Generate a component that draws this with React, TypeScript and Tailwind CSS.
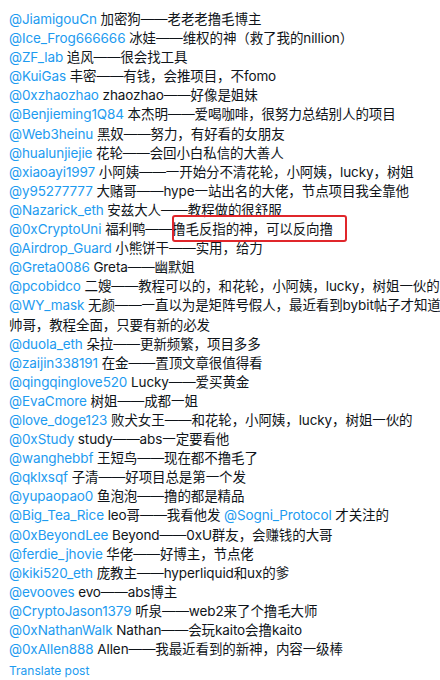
import React from "react";

type Row = { h?: string; t: (string | { at: string })[] };

const rows: Row[] = [
    { h: "JiamigouCn", t: ["加密狗——老老老撸毛博主"] },
    { h: "Ice_Frog666666", t: ["冰娃——维权的神（救了我的nillion）"] },
    { h: "ZF_lab", t: ["追风——很会找工具"] },
    { h: "KuiGas", t: ["丰密——有钱，会推项目，不fomo"] },
    { h: "0xzhaozhao", t: ["zhaozhao——好像是姐妹"] },
    { h: "Benjieming1Q84", t: ["本杰明——爱喝咖啡，很努力总结别人的项目"] },
    { h: "Web3heinu", t: ["黑奴——努力，有好看的女朋友"] },
    { h: "hualunjiejie", t: ["花轮——会回小白私信的大善人"] },
    { h: "xiaoayi1997", t: ["小阿姨——一开始分不清花轮，小阿姨，lucky，树姐"] },
    { h: "y95277777", t: ["大赌哥——hype一站出名的大佬，节点项目我全靠他"] },
    { h: "Nazarick_eth", t: ["安兹大人——教程做的很舒服"] },
    { h: "0xCryptoUni", t: ["福利鸭——撸毛反指的神，可以反向撸"] },
    { h: "Airdrop_Guard", t: ["小熊饼干——实用，给力"] },
    { h: "Greta0086", t: ["Greta——幽默姐"] },
    { h: "pcobidco", t: ["二嫂——教程可以的，和花轮，小阿姨，lucky，树姐一伙的"] },
    { h: "WY_mask", t: ["无颜——一直以为是矩阵号假人，最近看到bybit帖子才知道"] },
    { t: ["帅哥，教程全面，只要有新的必发"] },
    { h: "duola_eth", t: ["朵拉——更新频繁，项目多多"] },
    { h: "zaijin338191", t: ["在金——置顶文章很值得看"] },
    { h: "qingqinglove520", t: ["Lucky——爱买黄金"] },
    { h: "EvaCmore", t: ["树姐——成都一姐"] },
    { h: "love_doge123", t: ["败犬女王——和花轮，小阿姨，lucky，树姐一伙的"] },
    { h: "0xStudy", t: ["study——abs一定要看他"] },
    { h: "wanghebbf", t: ["王短鸟——现在都不撸毛了"] },
    { h: "qklxsqf", t: ["子清——好项目总是第一个发"] },
    { h: "yupaopao0", t: ["鱼泡泡——撸的都是精品"] },
    { h: "Big_Tea_Rice", t: ["leo哥——我看他发 ", { at: "Sogni_Protocol" }, " 才关注的"] },
    { h: "0xBeyondLee", t: ["Beyond——0xU群友，会赚钱的大哥"] },
    { h: "ferdie_jhovie", t: ["华佬——好博主，节点佬"] },
    { h: "kiki520_eth", t: ["庞教主——hyperliquid和ux的爹"] },
    { h: "evooves", t: ["evo——abs博主"] },
    { h: "CryptoJason1379", t: ["听泉——web2来了个撸毛大师"] },
    { h: "0xNathanWalk", t: ["Nathan——会玩kaito会撸kaito"] },
    { h: "0xAllen888", t: ["Allen——我最近看到的新神，内容一级棒"] },
];

export default function App() {
    return (
        <div
            className="relative w-[440px] h-[680px] bg-white overflow-hidden pt-[10px] pl-[9px]"
            style={{ fontFamily: 'Inter, "Noto Sans CJK SC", sans-serif' }}
        >
            <div className="text-[13.5px] leading-[19.1px] text-[#0f1419] whitespace-nowrap tracking-[-0.1px]">
                {rows.map((r, i) => (
                    <div key={i}>
                        {r.h && <span className="text-[#1d9bf0]">@{r.h} </span>}
                        {r.t.map((s, j) =>
                            typeof s === "string" ? (
                                <span key={j}>{s}</span>
                            ) : (
                                <span key={j} className="text-[#1d9bf0]">@{s.at}</span>
                            )
                        )}
                    </div>
                ))}
            </div>
            <div className="mt-[4px] text-[12px] leading-[16px] text-[#1d9bf0]">Translate post</div>

            {/* annotation box */}
            <div className="absolute left-[172px] top-[215px] w-[175px] h-[27px] border-2 border-[#e0262b] rounded-[3px]" />
        </div>
    );
}
